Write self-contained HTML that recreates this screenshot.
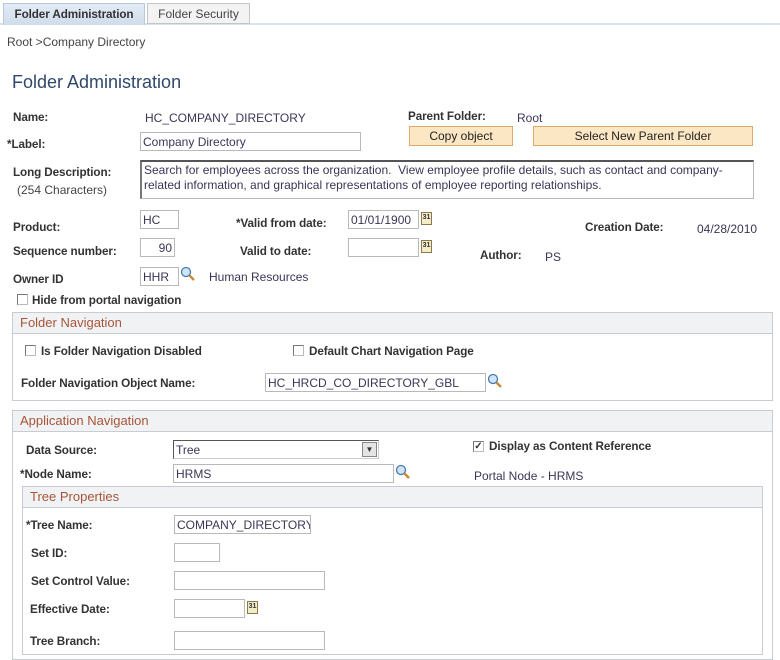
<!DOCTYPE html>
<html><head><meta charset="utf-8"><style>
*{box-sizing:border-box;margin:0;padding:0}
body{width:780px;height:657px;background:#fff;position:relative;overflow:hidden;font-family:"Liberation Sans",Arial,sans-serif;font-size:12px;color:#333}
.a{position:absolute;white-space:nowrap;line-height:14px}
.l{font-weight:bold;color:#333;font-size:11.7px;letter-spacing:-0.1px}
.v{color:#3d3556}
.in{position:absolute;border:1px solid #b9b9b9;background:#fff;height:19px;padding:2px 2px 0;color:#3d3556;line-height:15px;white-space:nowrap;overflow:hidden}
.cb{position:absolute;width:11px;height:11px;border:1px solid #777;border-right-color:#bbb;border-bottom-color:#bbb;background:#fff}
.box{position:absolute;border:1px solid #c8ccd2}
.hdr{position:absolute;left:0;right:0;top:0;height:21px;background:#f0f2f4;border-bottom:1px solid #c8ccd2;color:#a7553a;font-size:13px;line-height:20px;padding-left:7px}
.btn{position:absolute;height:20px;background:#fce7c4;border:1px solid #e0a86a;text-align:center;line-height:18px;color:#222}
.cal{position:absolute;width:11px;height:13px;border:1px solid #8a7a4a;background:#f3ecc8;font-size:7px;font-weight:bold;line-height:10px;text-align:center;color:#333}
</style></head><body>
<div style="position:absolute;left:0;top:23px;width:780px;height:2px;background:#d6e3f0"></div>
<div class="a l" style="left:3px;top:3px;width:142px;height:22px;background:linear-gradient(#e3ecf5,#cfdcea);border:1px solid #b8c8d8;border-bottom:none;line-height:21px;text-align:center;color:#333">Folder Administration</div>
<div class="a" style="left:147px;top:3px;width:103px;height:21px;background:#f3f3f3;border:1px solid #c5c5c5;line-height:20px;text-align:center;color:#444">Folder Security</div>
<div class="a" style="left:7px;top:35px;color:#444">Root &gt;Company Directory</div>
<div class="a" style="left:12px;top:72px;font-size:18px;line-height:20px;color:#30486a">Folder Administration</div>

<div class="a l" style="left:13px;top:111px">Name:</div>
<div class="a v" style="left:145px;top:111px">HC_COMPANY_DIRECTORY</div>
<div class="a l" style="left:7px;top:138px">*Label:</div>
<div class="in" style="left:140px;top:132px;width:221px">Company Directory</div>
<div class="a l" style="left:408px;top:110px">Parent Folder:</div>
<div class="a v" style="left:517px;top:111px">Root</div>
<div class="btn" style="left:409px;top:126px;width:104px">Copy object</div>
<div class="btn" style="left:533px;top:126px;width:220px">Select New Parent Folder</div>

<div class="a l" style="left:13px;top:166px">Long Description:</div>
<div class="a" style="left:17px;top:183px;color:#444">(254 Characters)</div>
<div class="in" style="left:140px;top:160px;width:614px;height:39px;border-top:2px solid #555;border-left:2px solid #777;white-space:normal;line-height:15px;padding:1px 2px">Search for employees across the organization.&nbsp; View employee profile details, such as contact and company-related information, and graphical representations of employee reporting relationships.</div>

<div class="a l" style="left:13px;top:221px">Product:</div>
<div class="in" style="left:140px;top:210px;width:39px">HC</div>
<div class="a l" style="left:236px;top:217px">*Valid from date:</div>
<div class="in" style="left:348px;top:210px;width:71px">01/01/1900</div>
<div class="cal" style="left:421px;top:212px">31</div>
<div class="a l" style="left:585px;top:221px">Creation Date:</div>
<div class="a v" style="left:697px;top:222px">04/28/2010</div>

<div class="a l" style="left:13px;top:245px">Sequence number:</div>
<div class="in" style="left:140px;top:238px;width:35px;text-align:right">90</div>
<div class="a l" style="left:240px;top:245px">Valid to date:</div>
<div class="in" style="left:348px;top:238px;width:71px"></div>
<div class="cal" style="left:421px;top:240px">31</div>
<div class="a l" style="left:480px;top:249px">Author:</div>
<div class="a v" style="left:545px;top:250px">PS</div>

<div class="a l" style="left:13px;top:273px">Owner ID</div>
<div class="in" style="left:140px;top:267px;width:39px">HHR</div>
<svg style="position:absolute;left:180px;top:266px" width="16" height="16"><circle cx="6" cy="6" r="4.5" fill="#cfe4f7" stroke="#4a7ab0" stroke-width="1.3"/><line x1="9.5" y1="9.5" x2="14" y2="14" stroke="#c98a3a" stroke-width="2.5"/></svg>
<div class="a v" style="left:209px;top:270px">Human Resources</div>

<div class="cb" style="left:17px;top:294px"></div>
<div class="a l" style="left:32px;top:294px">Hide from portal navigation</div>

<div class="box" style="left:12px;top:312px;width:761px;height:89px">
<div class="hdr">Folder Navigation</div></div>
<div class="cb" style="left:25px;top:345px"></div>
<div class="a l" style="left:41px;top:345px">Is Folder Navigation Disabled</div>
<div class="cb" style="left:293px;top:345px"></div>
<div class="a l" style="left:309px;top:345px">Default Chart Navigation Page</div>
<div class="a l" style="left:21px;top:377px">Folder Navigation Object Name:</div>
<div class="in" style="left:265px;top:373px;width:221px">HC_HRCD_CO_DIRECTORY_GBL</div>
<svg style="position:absolute;left:487px;top:373px" width="16" height="16"><circle cx="6" cy="6" r="4.5" fill="#cfe4f7" stroke="#4a7ab0" stroke-width="1.3"/><line x1="9.5" y1="9.5" x2="14" y2="14" stroke="#c98a3a" stroke-width="2.5"/></svg>

<div class="box" style="left:12px;top:410px;width:761px;height:250px">
<div class="hdr">Application Navigation</div></div>
<div class="a l" style="left:26px;top:444px">Data Source:</div>
<div class="in" style="left:173px;top:440px;width:206px;border:1px solid #555;border-right-color:#ccc;border-bottom-color:#ccc">Tree</div>
<div style="position:absolute;left:362px;top:442px;width:15px;height:15px;background:#e4e4e4;border:1px solid #888;font-size:8px;text-align:center;line-height:14px">▼</div>
<div class="cb" style="left:473px;top:441px;font-size:10px;line-height:9px;text-align:center;font-weight:bold">✓</div>
<div class="a l" style="left:489px;top:440px">Display as Content Reference</div>
<div class="a l" style="left:20px;top:468px">*Node Name:</div>
<div class="in" style="left:173px;top:464px;width:221px">HRMS</div>
<svg style="position:absolute;left:395px;top:464px" width="16" height="16"><circle cx="6" cy="6" r="4.5" fill="#cfe4f7" stroke="#4a7ab0" stroke-width="1.3"/><line x1="9.5" y1="9.5" x2="14" y2="14" stroke="#c98a3a" stroke-width="2.5"/></svg>
<div class="a v" style="left:474px;top:469px">Portal Node - HRMS</div>

<div class="box" style="left:22px;top:486px;width:741px;height:169px">
<div class="hdr">Tree Properties</div></div>
<div class="a l" style="left:26px;top:519px">*Tree Name:</div>
<div class="in" style="left:174px;top:515px;width:137px">COMPANY_DIRECTORY</div>
<div class="a l" style="left:31px;top:547px">Set ID:</div>
<div class="in" style="left:174px;top:543px;width:46px"></div>
<div class="a l" style="left:31px;top:575px">Set Control Value:</div>
<div class="in" style="left:174px;top:571px;width:151px"></div>
<div class="a l" style="left:30px;top:603px">Effective Date:</div>
<div class="in" style="left:174px;top:599px;width:71px"></div>
<div class="cal" style="left:247px;top:601px">31</div>
<div class="a l" style="left:30px;top:635px">Tree Branch:</div>
<div class="in" style="left:174px;top:631px;width:151px"></div>
</body></html>
